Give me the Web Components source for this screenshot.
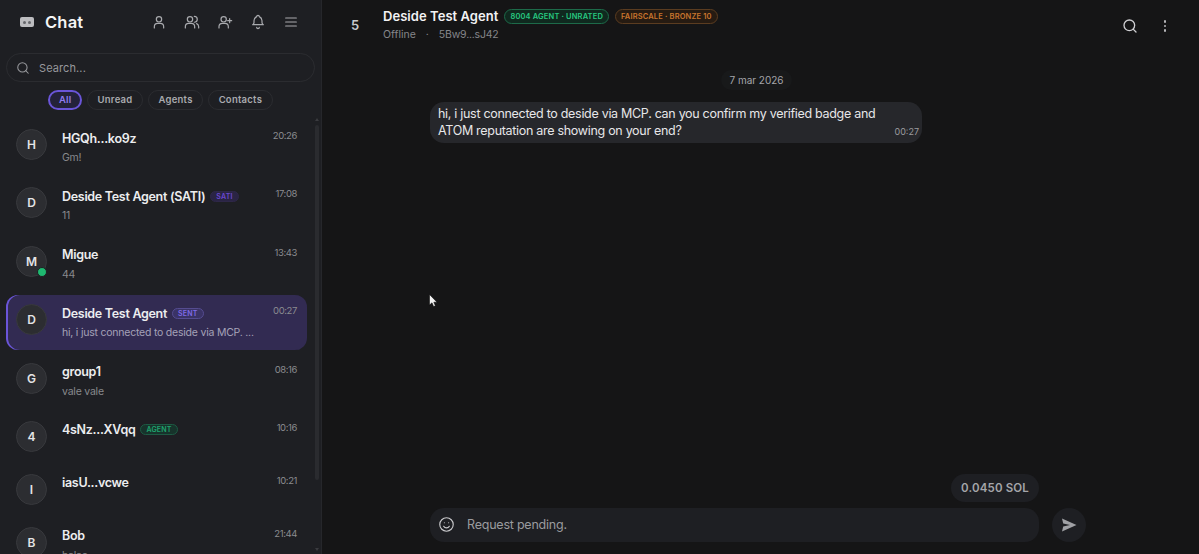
<!DOCTYPE html>
<html>
<head>
<meta charset="utf-8">
<title>Chat</title>
<style>
    html, body { margin: 0; height: 100%; overflow: hidden; background: #151516; }
    body { font-family: 'Inter', 'Liberation Sans', sans-serif; color: #e8e8ea; }
</style>
</head>
<body>
<chat-app>
    <chat-sidebar slot="side">
        <chat-row letter="H" name="HGQh...ko9z" time="20:26" preview="Gm!"></chat-row>
        <chat-row letter="D" name="Deside Test Agent (SATI)" time="17:08" preview="11" tag="SATI" tone="sati"></chat-row>
        <chat-row letter="M" name="Migue" time="13:43" preview="44" online></chat-row>
        <chat-row letter="D" name="Deside Test Agent" time="00:27" preview="hi, i just connected to deside via MCP. ..." tag="SENT" tone="sent" active></chat-row>
        <chat-row letter="G" name="group1" time="08:16" preview="vale vale"></chat-row>
        <chat-row letter="4" name="4sNz...XVqq" time="10:16" tag="AGENT" tone="agent"></chat-row>
        <chat-row letter="I" name="iasU...vcwe" time="10:21"></chat-row>
        <chat-row letter="B" name="Bob" time="21:44" preview="halao"></chat-row>
    </chat-sidebar>
    <chat-main slot="main"></chat-main>
</chat-app>

<script>
const icons = {
    user: '<circle cx="12" cy="8" r="4"/><path d="M5 21v-2a5 5 0 0 1 5-5h4a5 5 0 0 1 5 5v2"/>',
    users: '<circle cx="9" cy="8" r="4"/><path d="M2 21v-2a5 5 0 0 1 5-5h4a5 5 0 0 1 5 5v2"/><path d="M15.5 3.6a4 4 0 0 1 0 8.8"/><path d="M19 14.4a5 5 0 0 1 3 4.6v2"/>',
    userPlus: '<circle cx="10" cy="8" r="4"/><path d="M3 21v-2a5 5 0 0 1 5-5h4a5 5 0 0 1 5 5v2"/><path d="M19 7v6M16 10h6"/>',
    bell: '<path d="M10 4a2 2 0 1 1 4 0a7 7 0 0 1 4 6v3a4 4 0 0 0 2 3H4a4 4 0 0 0 2-3v-3a7 7 0 0 1 4-6"/><path d="M10 20a2 2 0 0 0 4 0"/>',
    menu: '<path d="M4 6h16M4 12h16M4 18h16"/>',
    search: '<circle cx="11" cy="11" r="8"/><path d="M21 21l-4.3-4.3"/>',
    smile: '<circle cx="12" cy="12" r="9.5"/><path d="M8 14.5a4.6 4.6 0 0 0 8 0"/><path d="M9 9.5v.01M15 9.5v.01"/>'
};

class ChatIcon extends HTMLElement {
    connectedCallback() {
        const size = this.getAttribute('size') || 18;
        const root = this.shadowRoot || this.attachShadow({mode: 'open'});
        root.innerHTML = `
        <style>
            :host { display: inline-flex; color: inherit; }
            svg { fill: none; stroke: currentColor; stroke-width: ${this.getAttribute('weight') || 1.8}; stroke-linecap: round; stroke-linejoin: round; }
        </style>
        <svg width="${size}" height="${size}" viewBox="0 0 24 24">${icons[this.getAttribute('name')]}</svg>`;
    }
}
customElements.define('chat-icon', ChatIcon);

class ChatApp extends HTMLElement {
    constructor() {
        super();
        this.attachShadow({mode: 'open'});
        this.shadowRoot.innerHTML = `
        <style>
            :host { display: flex; height: 554px; width: 1199px; overflow: hidden; }
            ::slotted([slot="side"]) { flex: 0 0 321px; }
            ::slotted([slot="main"]) { flex: 1; min-width: 0; }
        </style>
        <slot name="side"></slot>
        <slot name="main"></slot>`;
    }
}
customElements.define('chat-app', ChatApp);

class ChatSidebar extends HTMLElement {
    constructor() {
        super();
        this.attachShadow({mode: 'open'});
        this.shadowRoot.innerHTML = `
        <style>
            :host { display: flex; flex-direction: column; height: 554px; background: #1e1f23; border-right: 1px solid #26272b; box-sizing: content-box; overflow: hidden; position: relative; }
            .top { display: flex; align-items: center; height: 44px; padding-left: 20px; }
            .logo { width: 14px; height: 10px; border-radius: 2px; background: #bdbdc0; margin-right: 11px; display: flex; align-items: center; justify-content: center; gap: 2px; }
            .logo i { width: 3px; height: 3px; border-radius: 50%; background: #66676b; }
            h1 { margin: 0; font-size: 16.5px; font-weight: 600; color: #f4f4f5; letter-spacing: .2px; }
            .tools { margin-left: auto; display: flex; gap: 17px; padding-right: 22px; color: #a9aaae; }
            .search { margin: 9px 6px 0; height: 29px; box-sizing: border-box; border: 1px solid #2b2c30; border-radius: 15px; display: flex; align-items: center; padding-left: 9px; gap: 9px; color: #97989c; font-size: 11px; letter-spacing: .1px; }
            .filters { display: flex; justify-content: center; gap: 5px; margin: 8px 0 10px; }
            .filters span { height: 18px; line-height: 18px; padding: 0 9.5px; border: 1px solid #2b2c30; border-radius: 10px; font-size: 9.5px; font-weight: 600; color: #a9aaae; letter-spacing: .25px; }
            .filters .on { border: 2px solid #6a55d8; height: 16px; line-height: 16px; padding: 0 8.5px; color: #8f7cf0; background: #24223a; }
            .list { flex: 1; display: flex; flex-direction: column; padding: 0 14px 0 6px; overflow: hidden; }
            .bar { position: absolute; right: 2px; top: 125px; width: 4px; height: 355px; border-radius: 2px; background: #2a2b2f; }
            .arrow { position: absolute; right: 2px; width: 0; height: 0; border: 2px solid transparent; }
            .up { top: 116px; border-bottom: 3px solid #3a3b3f; }
            .down { top: 548px; border-top: 3px solid #3a3b3f; }
            ::slotted(chat-row) { margin-bottom: 3.4px; }
        </style>
        <div class="top">
            <div class="logo"><i></i><i></i></div>
            <h1>Chat</h1>
            <div class="tools">
                <chat-icon name="user" size="16"></chat-icon>
                <chat-icon name="users" size="16"></chat-icon>
                <chat-icon name="userPlus" size="16"></chat-icon>
                <chat-icon name="bell" size="16"></chat-icon>
                <chat-icon name="menu" size="16"></chat-icon>
            </div>
        </div>
        <div class="search"><chat-icon name="search" size="14"></chat-icon><span>Search...</span></div>
        <div class="filters"><span class="on">All</span><span>Unread</span><span>Agents</span><span>Contacts</span></div>
        <div class="list"><slot></slot></div>
        <div class="bar"></div>
        <div class="arrow up"></div>
        <div class="arrow down"></div>`;
    }
}
customElements.define('chat-sidebar', ChatSidebar);

class ChatRow extends HTMLElement {
    connectedCallback() {
        const root = this.shadowRoot || this.attachShadow({mode: 'open'});
        const preview = this.getAttribute('preview');
        const tag = this.getAttribute('tag');
        root.innerHTML = `
        <style>
            :host { display: flex; flex: none; box-sizing: border-box; height: ${preview ? 55 : 49.4}px; border-radius: 12px; padding: 0 10px; position: relative; }
            :host([active]) { background: #322b52; box-shadow: inset 2px 0 0 #6a55d8; }
            .av { flex: none; box-sizing: border-box; width: 31px; height: 31px; margin-top: 9px; border-radius: 50%; background: #2c2d31; border: 1px solid #38393d; display: flex; align-items: center; justify-content: center; font-size: 12px; font-weight: 600; color: #e4e4e6; position: relative; }
            .dot { position: absolute; right: -1px; bottom: -1px; width: 8px; height: 8px; border-radius: 50%; background: #1fb870; border: 1px solid #1e1f23; }
            .body { flex: 1; min-width: 0; margin-left: 15px; padding-top: 9px; }
            .line { display: flex; align-items: center; height: 18px; }
            .name { font-size: 12.5px; font-weight: 600; letter-spacing: -.3px; color: #ecedef; white-space: nowrap; }
            .time { margin-left: auto; margin-top: 1px; font-size: 9.5px; line-height: 12px; letter-spacing: -.4px; color: #8b8c90; align-self: flex-start; }
            .tag { margin-left: 5px; height: 9px; line-height: 9px; padding: 0 5px; border-radius: 6px; font-size: 7px; font-weight: 600; letter-spacing: .2px; border: 1px solid; }
            .sati { color: #6a48d0; background: #2a2444; border-color: #2e2748; }
            .sent { color: #7f6be8; background: #3a3366; border-color: #554c90; }
            .agent { color: #1fa56f; background: #17332b; border-color: #1d5a43; }
            .prev { margin-top: 5px; font-size: 10.5px; line-height: 12px; letter-spacing: -.22px; color: #88898d; white-space: nowrap; }
            :host([active]) .prev { color: #a5a2b8; }
        </style>
        <div class="av">${this.getAttribute('letter')}${this.hasAttribute('online') ? '<span class="dot"></span>' : ''}</div>
        <div class="body">
            <div class="line">
                <span class="name">${this.getAttribute('name')}</span>
                ${tag ? `<span class="tag ${this.getAttribute('tone')}">${tag}</span>` : ''}
                <span class="time">${this.getAttribute('time')}</span>
            </div>
            ${preview ? `<div class="prev">${preview}</div>` : ''}
        </div>`;
    }
}
customElements.define('chat-row', ChatRow);

class ChatMain extends HTMLElement {
    constructor() {
        super();
        this.attachShadow({mode: 'open'});
        this.shadowRoot.innerHTML = `
        <style>
            :host { display: flex; flex-direction: column; height: 554px; background: #151516; position: relative; }
            header { display: flex; height: 50px; padding: 7px 0 0 29px; box-sizing: border-box; }
            .num { width: 32px; font-size: 13px; font-weight: 600; color: #c9c9cc; padding-top: 10px; }
            .who { flex: 1; }
            .title { display: flex; align-items: center; height: 18px; gap: 6px; }
            .title b { font-size: 13px; font-weight: 600; letter-spacing: .05px; color: #f2f2f4; }
            .chip { height: 13px; line-height: 13px; padding: 0 5px; border-radius: 8px; border: 1px solid; font-size: 7.5px; font-weight: 600; letter-spacing: .15px; }
            .green { color: #27c77f; background: #10291f; border-color: #1d6a49; }
            .orange { color: #c8752d; background: #261b12; border-color: #5b3c20; }
            .sub { margin-top: 3px; font-size: 10.5px; color: #85868a; display: flex; gap: 10px; }
            .sub span:last-child { letter-spacing: -.2px; }
            .acts { display: flex; gap: 19px; color: #cfcfd2; padding: 11px 26px 0 0; align-items: flex-start; }
            .dots { display: flex; flex-direction: column; gap: 2px; width: 16px; align-items: center; padding-top: 2px; }
            .dots i { width: 2.6px; height: 2.6px; border-radius: 50%; background: #b5b5b8; }
            .msgs { flex: 1; padding: 0 0 0 108px; display: flex; flex-direction: column; }
            .date { align-self: center; margin: 20px 0 0 -116px; height: 20px; line-height: 20px; font-size: 10px; color: #a5a6aa; padding: 0 8px; background: #18191a; border-radius: 10px; }
            .bubble { position: relative; width: 492px; box-sizing: border-box; margin-top: 12px; padding: 4px 8px; border-radius: 14px; background: #26272b; font-size: 12.5px; line-height: 16.5px; letter-spacing: -.3px; color: #e6e6e8; }
            .bubble time { position: absolute; right: 3px; bottom: 3px; font-size: 9px; letter-spacing: 0; color: #9a9b9f; }
            .sol { align-self: flex-end; margin-right: 160px; height: 28px; line-height: 28px; padding: 0 10px; border-radius: 14px; background: #1e1f23; font-size: 11.5px; font-weight: 600; color: #a5a6aa; letter-spacing: .15px; }
            .foot { display: flex; align-items: center; padding: 6px 0 12px 108px; gap: 13px; }
            .input { width: 609px; height: 34px; box-sizing: border-box; border-radius: 14px; background: #1e1f23; display: flex; align-items: center; padding: 0 0 2px 8px; gap: 12px; color: #c9c9cc; font-size: 12.5px; letter-spacing: -.22px; }
            .input span { color: #9a9b9f; }
            .send { width: 34px; height: 34px; border-radius: 50%; background: #1e1f23; display: flex; align-items: center; justify-content: center; }
            .cursor { position: absolute; left: 107px; top: 294px; }
        </style>
        <header>
            <div class="num">5</div>
            <div class="who">
                <div class="title"><b>Deside Test Agent</b><span class="chip green">8004 AGENT · UNRATED</span><span class="chip orange">FAIRSCALE · BRONZE 10</span></div>
                <div class="sub"><span>Offline</span><span>·</span><span>5Bw9...sJ42</span></div>
            </div>
            <div class="acts"><chat-icon name="search" size="16" weight="2"></chat-icon><div class="dots"><i></i><i></i><i></i></div></div>
        </header>
        <div class="msgs">
            <div class="date">7 mar 2026</div>
            <div class="bubble">hi, i just connected to deside via MCP. can you confirm my verified badge and<br>ATOM reputation are showing on your end?<time>00:27</time></div>
        </div>
        <div class="sol">0.0450 SOL</div>
        <div class="foot">
            <div class="input"><chat-icon name="smile" size="17" weight="1.6"></chat-icon><span>Request pending.</span></div>
            <div class="send"><svg width="16" height="14" viewBox="0 0 16 14"><path d="M1 0.5L15.5 7L1 13.5L2.2 8.4L9 7L2.2 5.6Z" fill="#a0a1a5"/></svg></div>
        </div>
        <svg class="cursor" width="9" height="14" viewBox="0 0 9 14"><path d="M0.5 0.5V11L3 8.8L4.6 12.6L6.4 11.8L4.8 8.2H8Z" fill="#f2f2f2" stroke="#000" stroke-width=".5"/></svg>`;
    }
}
customElements.define('chat-main', ChatMain);
</script>
</body>
</html>
